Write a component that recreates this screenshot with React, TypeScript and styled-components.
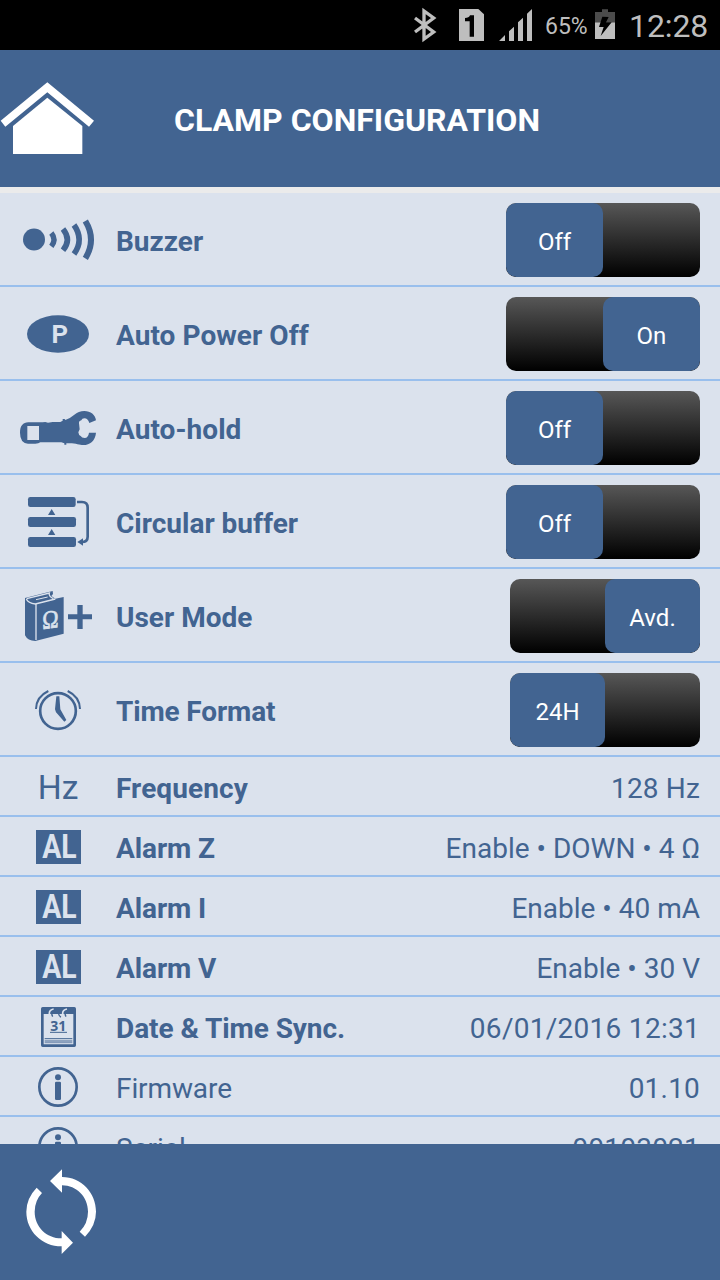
import React from "react";
import styled, { createGlobalStyle } from "styled-components";

const BLUE = "#426491";
const PALE = "#dbe2ed";

const GlobalStyle = createGlobalStyle`
  * { box-sizing: border-box; }
  body { margin: 0; background: ${BLUE}; font-family: Roboto, sans-serif; }
  svg { display: block; flex: none; }
`;

const Screen = styled.div`
  display: flex;
  flex-direction: column;
  width: 720px;
  height: 1280px;
  overflow: hidden;
  background: ${PALE};
  color: ${BLUE};
`;

const StatusBar = styled.div`
  display: flex;
  flex: none;
  align-items: center;
  justify-content: flex-end;
  height: 50px;
  padding-right: 12px;
  background: #000;
  color: #bebebe;
`;

const BatteryLevel = styled.span`
  margin: 3px 7px 0 12px;
  width: 43px;
  font-size: 23px;
  line-height: 28px;
  white-space: nowrap;
`;

const Clock = styled.span`
  width: 79px;
  margin: 2px 0 0 14px;
  font-size: 32px;
  line-height: 38px;
  letter-spacing: -0.1px;
  white-space: nowrap;
`;

const Header = styled.header`
  display: flex;
  flex: none;
  align-items: center;
  height: 143px;
  border-bottom: 6px solid #ebebeb;
  background: ${BLUE};
  color: #fff;
`;

const Title = styled.h1`
  flex: 1;
  margin: 3px 107px 0 0;
  text-align: center;
  font-size: 32px;
  line-height: 38px;
  font-weight: 700;
  white-space: nowrap;
`;

const List = styled.main`
  flex: 1;
  min-height: 0;
  overflow: hidden;
`;

const Row = styled.div<{ $tall?: boolean }>`
  display: flex;
  align-items: center;
  height: ${(p) => (p.$tall ? 94 : 60)}px;
  padding-right: 20px;
  border-bottom: 2px solid #99bfed;
`;

const Label = styled.span<{ $regular?: boolean; $tracking?: number }>`
  flex: 1;
  padding-top: 5px;
  font-size: 28px;
  line-height: 34px;
  font-weight: ${(p) => (p.$regular ? 400 : 700)};
  letter-spacing: ${(p) => p.$tracking ?? 0}px;
  white-space: nowrap;
`;

const Value = styled.span<{ $tracking?: number }>`
  padding-top: 5px;
  font-size: 28px;
  line-height: 34px;
  letter-spacing: ${(p) => p.$tracking ?? 0}px;
  white-space: nowrap;
`;

const Track = styled.div<{ $on: boolean; $width: number }>`
  display: flex;
  justify-content: ${(p) => (p.$on ? "flex-end" : "flex-start")};
  width: ${(p) => p.$width}px;
  height: 74px;
  margin-top: 2px;
  border-radius: 10px;
  overflow: hidden;
  background: linear-gradient(#575757, #000);
`;

const Thumb = styled.div`
  display: flex;
  align-items: center;
  justify-content: center;
  width: 50%;
  padding-top: 4px;
  border-radius: 10px;
  background: ${BLUE};
  color: #fff;
  font-size: 24px;
  line-height: 28px;
`;

const Footer = styled.footer`
  flex: none;
  height: 136px;
  background: ${BLUE};
`;

/* Row icons are drawn at three units per pixel in a 116px wide column. */
function Glyph({ top, height = 92, children }: { top: number; height?: number; children: React.ReactNode }) {
  return (
    <svg width="116" height={height} viewBox={`0 ${top} 348 ${height * 3}`} fill={BLUE}>
      {children}
    </svg>
  );
}

const BuzzerIcon = () => (
  <Glyph top={9}>
    <circle cx="102" cy="148.500" r="33" />
    <g fill="none" stroke={BLUE}>
      <path d="M154 129Q170 149 154 169" strokeWidth="16" />
      <path d="M189 117Q215 149 189 181" strokeWidth="17" />
      <path d="M222 105Q253 149 222 192" strokeWidth="17" />
      <path d="M256 93Q290 149 256 205" strokeWidth="18" />
    </g>
  </Glyph>
);

const PowerIcon = () => (
  <Glyph top={291}>
    <ellipse cx="174" cy="432" rx="93" ry="56" />
    <text x="179.500" y="460" textAnchor="middle" fill={PALE} fontSize="77" fontWeight="700">P</text>
  </Glyph>
);

const ClampIcon = () => (
  <Glyph top={3}>
    <path d="M60 158C60 137 69 128 85 127H128L136 126L144 128L158 126L181 126L188 122V117H194L196 120Q212 114 222 105Q236 93 253 93C272 93 286 104 288 121L268 129Q264 115 253 115Q246 115 244 121Q236 123 237 130L239 148L235 157Q236 166 242 168Q245 174 254 174Q265 173 267 158H288C286 182 270 195 250 195C237 195 226 188 199 190V194H193V190L184 187H121Q116 191 106 191H84Q60 189 60 158Z" />
    <rect x="82" y="138" width="35" height="42" fill={PALE} />
  </Glyph>
);

const BufferIcon = () => (
  <Glyph top={285}>
    <rect x="84" y="351" width="143" height="30" rx="7" />
    <rect x="84" y="411" width="144" height="30" rx="7" />
    <rect x="84" y="471" width="144" height="30" rx="7" />
    <path d="M155 387L166 405H144ZM155 447L166 465H144Z" />
    <path d="M231 366H246Q263 366 263 383V470Q263 486 245 486" fill="none" stroke={BLUE} strokeWidth="8" />
    <path d="M232 486L249 475V497Z" />
  </Glyph>
);

const BookIcon = () => (
  <Glyph top={-3}>
    <path d="M75 84L158 63L159 72L154 78L166 86L191 81V191L106 213Q83 213 75 196Z" />
    <path d="M79 87Q84 99 106 102L166 87M108 102V210" fill="none" stroke={PALE} strokeWidth="4" />
    <path d="M80 86L148 69Q145 79 160 86" fill="none" stroke={PALE} strokeWidth="4" />
    <path d="M108 89L143 81" stroke={PALE} strokeWidth="3" />
    <text
      transform="translate(151 174) skewY(-8)"
      textAnchor="middle"
      fill={PALE}
      stroke={PALE}
      strokeWidth="2"
      fontFamily="Liberation Serif, serif"
      fontSize="77"
      textLength="49"
      lengthAdjust="spacingAndGlyphs"
    >
      Ω
    </text>
    <path d="M232 105H248V133H276V148H248V177H232V148H204V133H232Z" />
  </Glyph>
);

const ClockIcon = () => (
  <Glyph top={279}>
    <circle cx="174" cy="423" r="53.500" fill="none" stroke={BLUE} strokeWidth="8" />
    <path d="M169 379H178L181 418L199 450L193 455L168 427L165 418Z" />
    <path d="M145 363Q109 380 108 417M203 363Q239 380 240 417" fill="none" stroke={BLUE} strokeWidth="6" />
  </Glyph>
);

const HertzIcon = () => (
  <Glyph top={3} height={58}>
    <text x="174.500" y="129" textAnchor="middle" fontSize="101" textLength="122" lengthAdjust="spacingAndGlyphs">Hz</text>
  </Glyph>
);

const AlarmIcon = () => (
  <Glyph top={183} height={58}>
    <rect x="108" y="222" width="135" height="102" />
    <text x="127" y="307" fill={PALE} fontSize="99" fontWeight="700" textLength="103" lengthAdjust="spacingAndGlyphs">AL</text>
  </Glyph>
);

const CalendarIcon = () => (
  <Glyph top={21} height={58}>
    <path fillRule="evenodd" d="M128 51H223Q228 51 228 56V166Q228 171 223 171H128Q123 171 123 166V56Q123 51 128 51ZM131 72V163H220V72Z" />
    <path d="M161 57Q147 60 148 71Q149 80 159 83M201 57Q187 60 188 71Q189 80 199 83M170 74Q173 81 181 83" fill="none" stroke={PALE} strokeWidth="5" />
    <path d="M163 60Q151 67 158 80M203 60Q191 67 198 80M176 72Q177 79 183 81" fill="none" stroke={BLUE} strokeWidth="4" />
    <text x="175" y="122" textAnchor="middle" fontFamily="Open Sans, sans-serif" fontSize="42" fontWeight="700">31</text>
    <path d="M150 127H201M134 146H217M134 153H217" stroke={BLUE} strokeWidth="3" />
    <path d="M134 158H217" stroke={BLUE} strokeWidth="2" />
  </Glyph>
);

const InfoIcon = () => (
  <Glyph top={201} height={58}>
    <circle cx="174" cy="291" r="56" fill="none" stroke={BLUE} strokeWidth="8" />
    <circle cx="174" cy="262" r="9" />
    <rect x="165" y="275" width="18" height="55" rx="4" />
  </Glyph>
);

const switches = [
  { label: "Buzzer", state: "Off", on: false, width: 194, Icon: BuzzerIcon },
  { label: "Auto Power Off", state: "On", on: true, width: 194, tracking: 0.05, Icon: PowerIcon },
  { label: "Auto-hold", state: "Off", on: false, width: 194, tracking: 0.05, Icon: ClampIcon },
  { label: "Circular buffer", state: "Off", on: false, width: 194, Icon: BufferIcon },
  { label: "User Mode", state: "Avd.", on: true, width: 190, Icon: BookIcon },
  { label: "Time Format", state: "24H", on: false, width: 190, tracking: -0.15, Icon: ClockIcon },
];

const details = [
  { label: "Frequency", value: "128 Hz", valueTracking: 0.15, tracking: 0.08, Icon: HertzIcon },
  { label: "Alarm Z", value: "Enable • DOWN • 4 Ω", tracking: -0.1, Icon: AlarmIcon },
  { label: "Alarm I", value: "Enable • 40 mA", tracking: -0.1, Icon: AlarmIcon },
  { label: "Alarm V", value: "Enable • 30 V", tracking: -0.1, Icon: AlarmIcon },
  { label: "Date & Time Sync.", value: "06/01/2016 12:31", valueTracking: 0.28, tracking: -0.07, Icon: CalendarIcon },
  { label: "Firmware", value: "01.10", valueTracking: 0.2, regular: true, tracking: -0.1, Icon: InfoIcon },
  { label: "Serial", value: "00103021", valueTracking: 0.22, regular: true, Icon: InfoIcon },
];

const StatusIcons = () => (
  <svg width="133" height="50" viewBox="0 0 399 150" fill="#bebebe">
    <path d="M45 54L101 96L72 117V33L101 54L45 96" fill="none" stroke="#bebebe" strokeWidth="10" />
    <path d="M177 27H235L252 43V123H177Z" />
    <path d="M210 46H222V110H209V64H195V54Q207 54 210 46Z" fill="#000" />
    <path d="M297 123L315 105V123ZM327 123V94L342 80V123ZM354 123V67L369 53V123ZM381 123V41L396 27V123Z" />
  </svg>
);

const BatteryIcon = () => (
  <svg width="20" height="50" viewBox="585 0 60 150">
    <path d="M606 28H624V36H645V67H585V36H606Z" fill="#4c4c4c" />
    <path d="M585 67H645V117H585Z" fill="#bebebe" />
    <path d="M607 50L626 51L618 67H635L602 108L611 81H597Z" fill="#000" />
  </svg>
);

const HomeIcon = () => (
  <svg width="101" height="137" viewBox="0 0 303 411" fill="#fff">
    <path d="M142 97L282 212L267 230L142 127L16 230L2 212Z" />
    <path d="M142 143L247 228V312H39V228Z" />
  </svg>
);

const SyncIcon = () => (
  <svg width="116" height="136" viewBox="0 462 348 408" fill="#fff">
    <path d="M150 573L186 538V561C244 561 288 609 288 665Q288 706 255 740L239 725Q264 700 264 665C264 621 230 586 186 586V608Z" />
    <path d="M219 758L185 792V769C126 769 79 723 79 665Q79 625 110 593L126 609Q104 632 104 665C104 710 139 745 185 745V723Z" />
  </svg>
);

export default function App() {
  return (
    <Screen>
      <GlobalStyle />
      <StatusBar>
        <StatusIcons />
        <BatteryLevel>65%</BatteryLevel>
        <BatteryIcon />
        <Clock>12:28</Clock>
      </StatusBar>
      <Header>
        <HomeIcon />
        <Title>CLAMP CONFIGURATION</Title>
      </Header>
      <List>
        {switches.map(({ label, state, on, width, tracking, Icon }) => (
          <Row key={label} $tall>
            <Icon />
            <Label $tracking={tracking}>{label}</Label>
            <Track $on={on} $width={width}>
              <Thumb>{state}</Thumb>
            </Track>
          </Row>
        ))}
        {details.map(({ label, value, regular, tracking, valueTracking, Icon }) => (
          <Row key={label}>
            <Icon />
            <Label $regular={regular} $tracking={tracking}>{label}</Label>
            <Value $tracking={valueTracking}>{value}</Value>
          </Row>
        ))}
      </List>
      <Footer>
        <SyncIcon />
      </Footer>
    </Screen>
  );
}
